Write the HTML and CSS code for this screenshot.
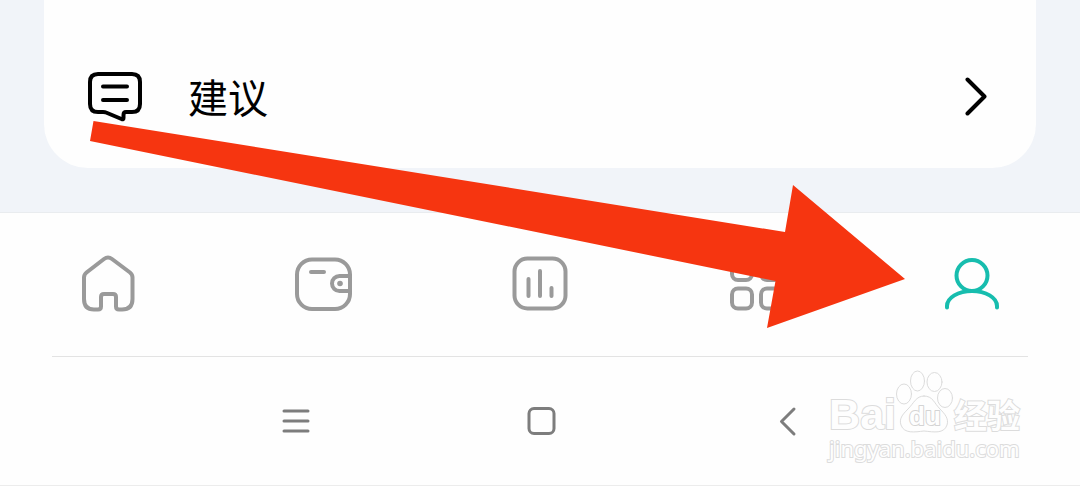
FILE: index.html
```html
<!DOCTYPE html>
<html lang="zh-CN">
<head>
<meta charset="utf-8">
<meta name="viewport" content="width=device-width, initial-scale=1">
<title>我的</title>

<link rel="stylesheet" href="styles.css">
</head>

<body>

<main class="page">
<div class="card">
<a class="row" href="#">
<svg class="row-icon" viewBox="0 0 56 56" aria-hidden="true">
<path d="M10 4H44Q52 4 52 12V34Q52 42 44 42H38Q35.500 42 35.500 45V48Q35.500 50 33.500 49L18 42.500Q17 42 15 42H10Q2 42 2 34V12Q2 4 10 4Z"/>
<path d="M15 16.500H39M15 30H39"/>
</svg>
<span class="row-label">建议</span>
<svg class="row-arrow" viewBox="0 0 24 40" aria-hidden="true">
<path d="M3.500 2.500L20.500 19.500L3.500 36.500"/>
</svg>
</a>
</div>
</main>

<nav class="tabs">
<a class="tab" href="#" aria-label="首页">
<svg viewBox="0 0 64 64">
<path d="M28 7Q32 4 36 7L54 20.500Q56.500 22.500 56.500 25.500V47Q56.500 57.500 46 57.500H43Q40 57.500 40 54.500V45Q40 42 37 42H28Q25 42 25 45V54.500Q25 57.500 22 57.500H18Q8 57.500 8 47V25.500Q8 22.500 10.500 20.500Z"/>
</svg>
</a>
<a class="tab" href="#" aria-label="钱包">
<svg viewBox="0 0 64 64">
<rect x="5" y="7.500" width="53" height="49.500" rx="15"/>
<path d="M19 20H32M58 24H47.500A7.500 7.500 0 0 0 47.500 39H58"/>
<circle class="dot" cx="48" cy="31.500" r="2.800"/>
</svg>
</a>
<a class="tab" href="#" aria-label="统计">
<svg viewBox="0 0 64 64">
<rect x="6.500" y="6.500" width="51" height="50" rx="13"/>
<path d="M20.500 27V44M32 19V44M43.500 36V44"/>
</svg>
</a>
<a class="tab" href="#" aria-label="应用">
<svg viewBox="0 0 64 64">
<rect x="8" y="8" width="20" height="20" rx="6"/>
<rect x="37" y="8" width="20" height="20" rx="6"/>
<rect x="8" y="36.500" width="20" height="20" rx="6"/>
<rect x="37" y="36.500" width="20" height="20" rx="6"/>
</svg>
</a>
<a class="tab active" href="#" aria-label="我的">
<svg viewBox="0 0 64 64">
<circle cx="32" cy="23.500" r="15.500"/>
<path d="M7 55.500V54A25 15 0 0 1 57 54V55.500"/>
</svg>
</a>
</nav>

<div class="system">
<button class="key" aria-label="菜单">
<svg viewBox="0 0 32 32"><path d="M4 6H28M4 16H28M4 26H28"/></svg>
</button>
<button class="key" aria-label="主屏幕">
<svg viewBox="0 0 32 32"><rect x="3" y="3.500" width="25" height="25" rx="5"/></svg>
</button>
<button class="key" aria-label="返回">
<svg viewBox="0 0 32 32"><path d="M22 4L9.500 16.500L22 29"/></svg>
</button>
</div>

<svg class="pointer" viewBox="0 0 1080 486" aria-hidden="true">
<polygon points="93.500,121 785,232 793,185 905,279 767,328 775.500,281 90,141"/>
</svg>

<div class="watermark">
<div class="brand">
<span class="brand-name">Bai</span>
<svg class="paw" viewBox="0 0 58 64">
<ellipse cx="8" cy="24" rx="7.500" ry="10"/>
<ellipse cx="21.500" cy="11" rx="7" ry="10"/>
<ellipse cx="38.500" cy="12" rx="7.500" ry="9.500"/>
<ellipse cx="49" cy="28" rx="7.500" ry="9.500"/>
<path d="M28 26C20 26 18 33 12 39C6 45 3 49 5 55C8 64 19 62 28 61C38 62 48 64 51 55C53 49 49 44 44 39C38 33 37 26 28 26Z"/>
<text x="13" y="55">du</text>
</svg>
<span class="brand-cn">经验</span>
</div>
<div class="site">jingyan.baidu.com</div>
</div>

</body>
</html>
```

FILE: styles.css
```css
*{
box-sizing:border-box;
}

body{
margin:0;
position:relative;
background:#fefefe;
color:#000;
font-family:"Noto Sans CJK SC",sans-serif;
}

svg{
display:block;
fill:none;
stroke:currentColor;
stroke-linecap:round;
stroke-linejoin:round;
}

.page{
padding:0 44px 44px;
background:#f1f4f9;
}

.card{
padding:26px 48px 2px 44px;
background:#fefefe;
border-radius:0 0 44px 44px;
}

.row{
display:flex;
align-items:center;
gap:44px;
height:140px;
color:inherit;
text-decoration:none;
}

.row-icon{
width:56px;
height:56px;
margin-top:4px;
stroke-width:4;
}

.row-label{
flex:1;
font-size:40px;
line-height:56px;
}

.row-arrow{
width:24px;
height:40px;
margin-top:2px;
stroke-width:4;
}

.tabs{
display:grid;
grid-template-columns:repeat(5,1fr);
height:144px;
padding-bottom:2px;
border-top:1px solid #e9ecef;
}

.tab{
display:flex;
align-items:center;
justify-content:center;
color:#9a9a9a;
}

.tab svg{
width:64px;
height:64px;
stroke-width:4;
}

.tab .dot{
fill:currentColor;
stroke:none;
}

.tab.active{
color:#17bdae;
}

.system{
display:grid;
grid-template-columns:repeat(3,246px);
justify-content:center;
height:130px;
margin:0 52px;
padding:0 0 2px 4px;
border-top:1px solid #e3e3e3;
}

.key{
display:flex;
align-items:center;
justify-content:center;
padding:0;
border:none;
background:none;
color:#7d7d7d;
}

.key svg{
width:32px;
height:32px;
stroke-width:3;
}

body::after{
content:"";
position:absolute;
left:0;
right:0;
bottom:0;
border-top:1px solid #ececec;
}

.pointer{
position:absolute;
top:0;
left:0;
width:100%;
pointer-events:none;
}

.pointer polygon{
fill:#f63510;
stroke:none;
}

/* watermark in the corner */
.watermark{
position:absolute;
right:60px;
bottom:24px;
color:#fefefe;
pointer-events:none;
}

.brand{
display:flex;
align-items:flex-end;
height:64px;
}

.brand-name,
.brand-cn,
.site{
-webkit-text-stroke:2px #dcdcdc;
paint-order:stroke fill;
}

.brand-name{
font-family:"Liberation Sans",Arial,sans-serif;
font-size:43px;
font-weight:bold;
line-height:40px;
}

.brand-cn{
font-size:33px;
font-weight:bold;
line-height:40px;
}

.paw{
width:58px;
height:64px;
stroke:#dcdcdc;
}

.paw text{
fill:#fefefe;
stroke:#d4d4d4;
stroke-width:2;
paint-order:stroke fill;
font-family:"Liberation Sans",Arial,sans-serif;
font-size:26px;
font-weight:bold;
}

.site{
font-family:"Noto Sans",sans-serif;
font-size:22px;
line-height:28px;
}
```
